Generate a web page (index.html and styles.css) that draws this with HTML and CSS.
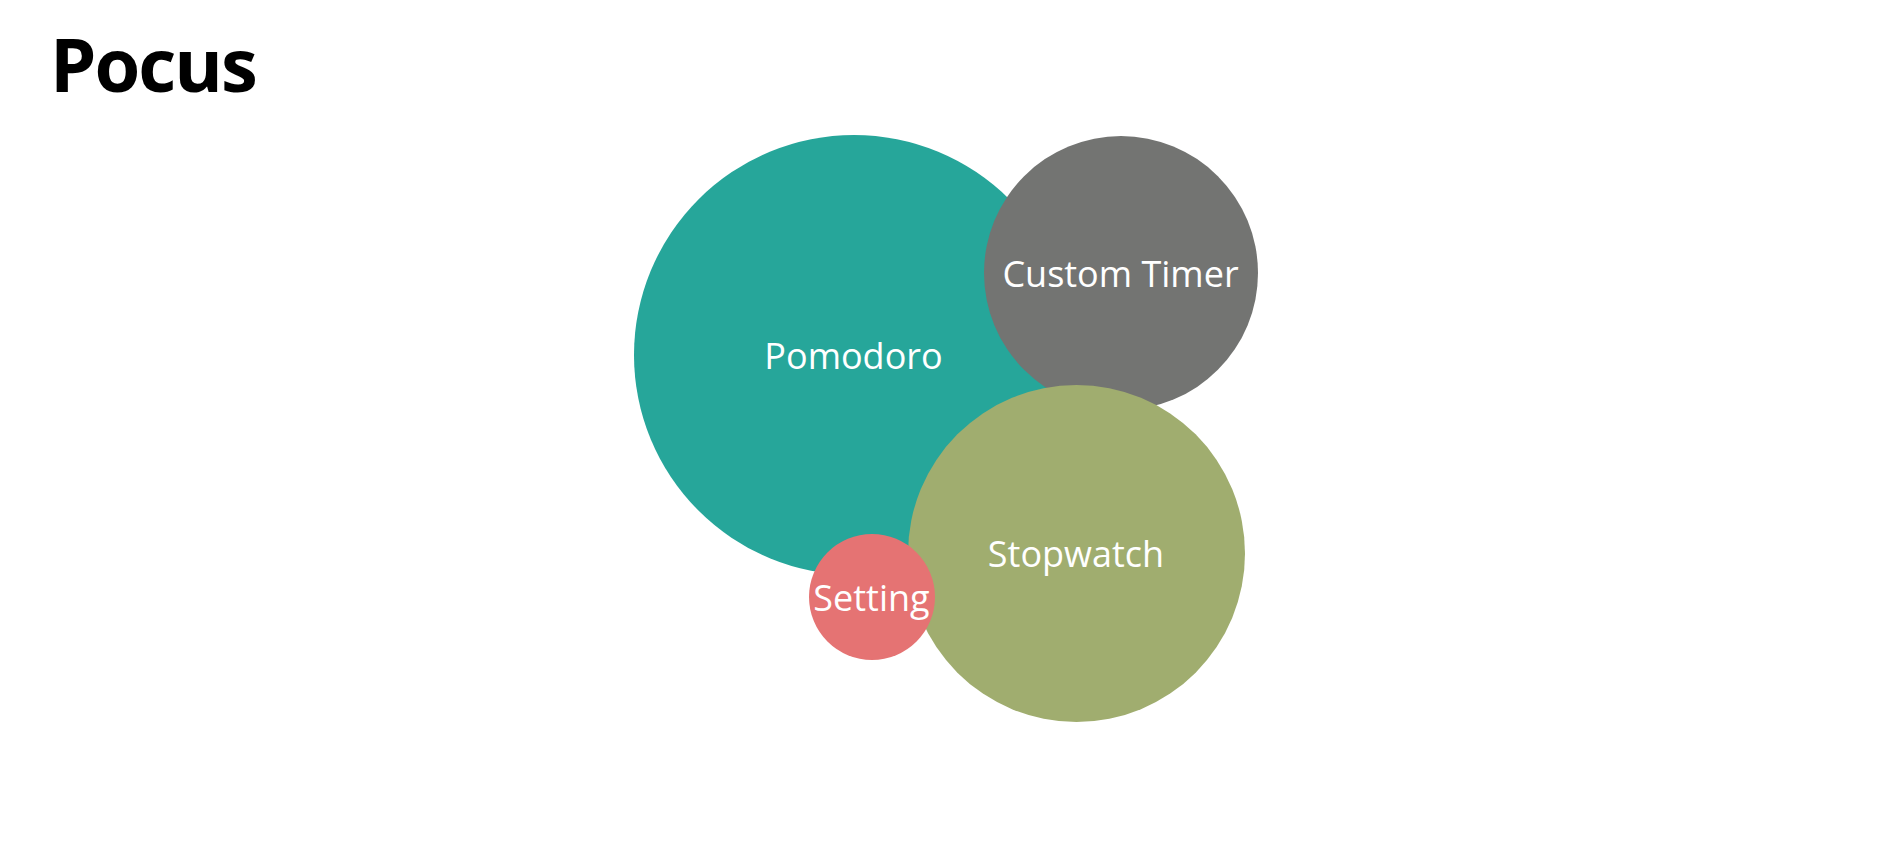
FILE: index.html
```html
<!DOCTYPE html>
<html lang="en">
<head>
<meta charset="utf-8">
<title>Pocus</title>
<link rel="stylesheet" href="styles.css">
</head>
<body>
<header class="header">
  <h1 class="title">Pocus</h1>
</header>
<main class="main">
  <div class="bubbles">
    <a class="bubble bubble-pomodoro">Pomodoro</a>
    <a class="bubble bubble-custom">Custom Timer</a>
    <a class="bubble bubble-stopwatch">Stopwatch</a>
    <a class="bubble bubble-setting">Setting</a>
  </div>
</main>
</body>
</html>
```
FILE: styles.css
```css
html, body {
  margin: 0;
  padding: 0;
  background: #ffffff;
}
body {
  font-family: "Open Sans", "Noto Sans", "DejaVu Sans", sans-serif;
  width: 1891px;
  height: 842px;
  overflow: hidden;
}
.header {
  padding: 13px 0 0 50px;
  height: 117px;
  box-sizing: border-box;
  overflow: visible;
}
.title {
  margin: 0;
  font-size: 74px;
  font-weight: 700;
  line-height: 101px;
  height: 101px;
  color: #000;
  letter-spacing: -2px;
}
.main {
  display: flex;
  justify-content: center;
}
.bubbles {
  position: relative;
  width: 624px;
  height: 586px;
  margin-top: 18px;
}
.bubble {
  position: absolute;
  border-radius: 50%;
  display: flex;
  align-items: center;
  justify-content: center;
  color: #ffffff;
  font-size: 36px;
  font-weight: 400;
  white-space: nowrap;
  cursor: pointer;
}
.bubble-pomodoro {
  left: 0;
  top: 0;
  width: 440px;
  height: 440px;
  background: #26a69a;
}
.bubble-custom {
  left: 350px;
  top: 1px;
  width: 274px;
  height: 274px;
  background: #737472;
}
.bubble-stopwatch {
  left: 274px;
  top: 250px;
  width: 337px;
  height: 337px;
  background: #a0ad6f;
}
.bubble-setting {
  left: 175px;
  top: 399px;
  width: 126px;
  height: 126px;
  background: #e57373;
}
```
